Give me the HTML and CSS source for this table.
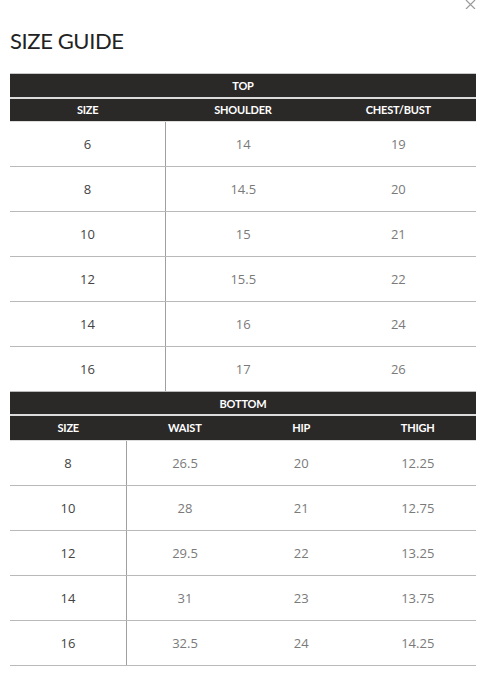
FILE: index.html
```html
<!DOCTYPE html>
<html>
<head>
<meta charset="utf-8">
<link rel="stylesheet" href="styles.css">
</head>
<body>
<div class="modal">
  <button class="close" aria-label="Close">
    <svg width="11" height="9" viewBox="0 0 11 9"><path d="M1 0 L10 9 M10 0 L1 9" stroke="#9a9a9a" stroke-width="1.2" fill="none"/></svg>
  </button>
  <h1 class="title">SIZE GUIDE</h1>
  <table class="size-table top">
    <thead>
      <tr class="group"><th colspan="3">TOP</th></tr>
      <tr class="cols"><th>SIZE</th><th>SHOULDER</th><th>CHEST/BUST</th></tr>
    </thead>
    <tbody>
      <tr><td>6</td><td>14</td><td>19</td></tr>
      <tr><td>8</td><td>14.5</td><td>20</td></tr>
      <tr><td>10</td><td>15</td><td>21</td></tr>
      <tr><td>12</td><td>15.5</td><td>22</td></tr>
      <tr><td>14</td><td>16</td><td>24</td></tr>
      <tr><td>16</td><td>17</td><td>26</td></tr>
    </tbody>
  </table>
  <table class="size-table bottom">
    <thead>
      <tr class="group"><th colspan="4">BOTTOM</th></tr>
      <tr class="cols"><th>SIZE</th><th>WAIST</th><th>HIP</th><th>THIGH</th></tr>
    </thead>
    <tbody>
      <tr><td>8</td><td>26.5</td><td>20</td><td>12.25</td></tr>
      <tr><td>10</td><td>28</td><td>21</td><td>12.75</td></tr>
      <tr><td>12</td><td>29.5</td><td>22</td><td>13.25</td></tr>
      <tr><td>14</td><td>31</td><td>23</td><td>13.75</td></tr>
      <tr><td>16</td><td>32.5</td><td>24</td><td>14.25</td></tr>
    </tbody>
  </table>
</div>
</body>
</html>
```
FILE: styles.css
```css
* { box-sizing: border-box; }
html, body { margin: 0; padding: 0; background: #fff; }
.modal {
  position: relative;
  width: 483px;
  padding: 0 7px 0 10px;
  font-family: "Lato", "Open Sans", sans-serif;
}
.close {
  position: absolute;
  top: -1px;
  right: 6px;
  width: 13px;
  height: 10px;
  padding: 0;
  border: 0;
  background: none;
  display: flex;
  align-items: center;
  justify-content: center;
}
.title {
  margin: 0;
  padding-top: 28px;
  height: 73px;
  font-size: 22px;
  font-weight: 400;
  color: #222;
  letter-spacing: -0.4px;
  line-height: 26px;
}
.size-table {
  width: 466px;
  border-collapse: collapse;
  table-layout: fixed;
}
.size-table.top { border-top: 1px solid #c9c9c9; }
.size-table th {
  background: #2b2928;
  color: #fff;
  font-size: 11px;
  font-weight: 700;
  padding: 0;
  text-align: center;
  letter-spacing: -0.2px;
}
.size-table .group th {
  height: 24px;
  border-bottom: 2px solid #dcdcdc;
}
.size-table .cols th {
  height: 24px;
  border-bottom: 1px solid #dcdcdc;
}
.size-table.bottom .group th { height: 23px; }
.size-table.bottom .cols th { height: 25px; }
.size-table td {
  height: 45px;
  padding: 0;
  text-align: center;
  border-bottom: 1px solid #b9b9b9;
  font-family: "Open Sans", sans-serif;
  font-size: 13px;
  color: #7a7a7a;
}
.size-table td:first-child {
  color: #444;
  border-right: 1px solid #a0a0a0;
}
```
